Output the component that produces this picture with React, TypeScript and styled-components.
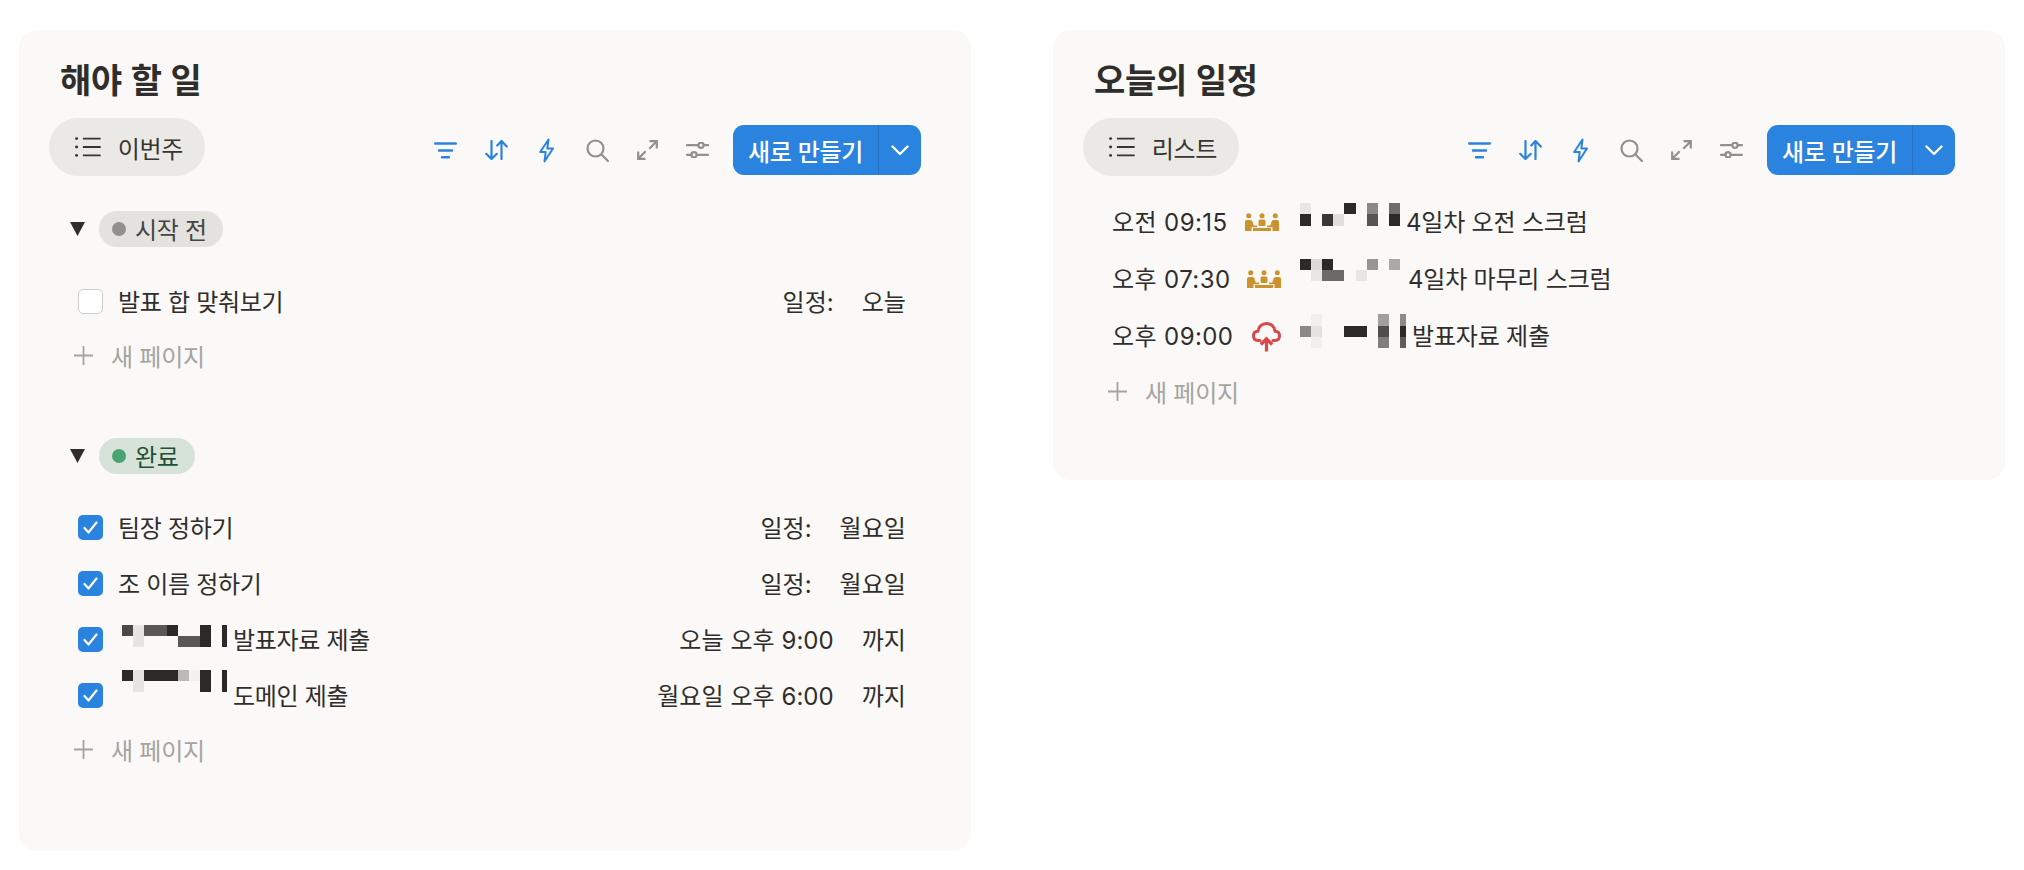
import React from "react";
import styled, { createGlobalStyle } from "styled-components";

const Global = createGlobalStyle`
  html, body { margin: 0; padding: 0; background: #fff; }
  body { font-family: Inter, "Noto Sans CJK KR", sans-serif; color: #2f2e2c; }
`;
const Page = styled.div`
  display: flex; align-items: flex-start; gap: 82px; padding: 30px 19px 0;
`;
const Panel = styled.section<{ $bottom: number }>`
  width: 952px; flex: none; box-sizing: border-box; background: #faf9f7; border-radius: 18px;
  padding: 31px 50px ${(p) => p.$bottom}px 30px;
`;
const Title = styled.h2`
  margin: 0 0 17px 11px; height: 40px; line-height: 40px; font-size: 34px; font-weight: 700; color: #2f2e2c;
  letter-spacing: -0.3px; word-spacing: 1px;
`;
const Toolbar = styled.div`
  display: flex; align-items: center; justify-content: space-between; height: 58px;
`;
const ViewPill = styled.div`
  display: flex; align-items: center; gap: 17px; height: 58px; padding: 0 22px 0 26px;
  background: #eae9e6; border-radius: 29px; font-size: 24px; color: #37352f; box-sizing: border-box;
  width: 156px; white-space: nowrap; letter-spacing: -0.3px;
`;
const Tools = styled.div`
  display: flex; align-items: center; margin-top: 6px;
`;
const ToolIcon = styled.span`
  display: flex; justify-content: center; align-items: center; width: 50.4px; height: 50px;
`;
const NewButton = styled.div`
  display: flex; height: 50px; background: #2a83de; border-radius: 11px; color: #fff; overflow: hidden; margin-left: 10px;
`;
const NewLabel = styled.span`
  display: flex; align-items: center; justify-content: center; width: 146px; box-sizing: border-box; font-size: 24px; font-weight: 500;
  letter-spacing: -0.3px; white-space: nowrap; border-right: 1px solid #2672c2;
`;
const NewCaret = styled.span`
  display: flex; align-items: center; justify-content: center; width: 42px;
`;
const GroupHead = styled.div<{ $top: number }>`
  display: flex; align-items: center; gap: 14px; margin: ${(p) => p.$top}px 0 0 21px; height: 36px;
`;
const StatusPill = styled.span<{ $bg: string; $fg: string }>`
  display: flex; align-items: center; gap: 9px; height: 36px; padding: 0 16px 0 13px; border-radius: 18px;
  background: ${(p) => p.$bg}; color: ${(p) => p.$fg}; font-size: 24px; white-space: nowrap; letter-spacing: -0.3px;
`;
const StatusText = styled.span`
  margin-bottom: 2px;
`;
const Dot = styled.i<{ $c: string }>`
  width: 14px; height: 14px; border-radius: 50%; background: ${(p) => p.$c}; flex: none;
`;
const List = styled.div<{ $top: number }>`
  margin-top: ${(p) => p.$top}px;
`;
const Row = styled.div`
  display: flex; align-items: center; height: 56px; padding: 0 15px 0 29px; font-size: 24px; letter-spacing: -0.3px; white-space: nowrap;
`;
const Check = styled.span<{ $on?: boolean }>`
  display: flex; align-items: center; justify-content: center; width: 25px; height: 25px; box-sizing: border-box; flex: none;
  margin-right: 15px; border-radius: 5px; background: ${(p) => (p.$on ? "#2a83de" : "#fff")};
  border: ${(p) => (p.$on ? "none" : "1px solid #cfcec9")};
`;
const RowName = styled.span`
  display: flex; align-items: center; flex: 1; min-width: 0; margin-bottom: 2px;
`;
const Meta = styled.span`
  display: flex; gap: 28px; margin-bottom: 2px; letter-spacing: 0.05px;
`;
const Mosaic = styled.svg<{ $lift: number; $left?: number }>`
  display: block; flex: none; margin-left: ${(p) => p.$left ?? 0}px; margin-right: 6px; margin-bottom: ${(p) => p.$lift}px;
  shape-rendering: crispEdges;
`;
const AddRow = styled.div<{ $h: number; $pad: number }>`
  display: flex; align-items: center; gap: 18px; height: ${(p) => p.$h}px; padding: 0 0 ${(p) => p.$pad}px 25px; box-sizing: border-box;
  color: #a5a49f; font-size: 24px; letter-spacing: -0.25px;
`;
const TimeRow = styled.div`
  display: flex; align-items: center; height: 57px; padding-left: 29px; font-size: 24px; white-space: nowrap; letter-spacing: -0.2px;
`;
const Time = styled.span`
  width: 133px; flex: none; letter-spacing: 0.4px; margin-bottom: 2px;
`;
const EventName = styled.span`
  margin-bottom: 2px;
`;
const EventIcon = styled.span<{ $left?: number; $down?: number }>`
  display: flex; align-items: center; justify-content: flex-end; width: 36px; flex: none;
  margin-left: ${(p) => p.$left ?? 0}px; margin-right: 19px; margin-top: ${(p) => p.$down ?? 0}px;
`;

const dark = "#2b2a28";
type Cell = [number, number, number, number, string];
const M = ({ w, h, lift, left, cells, gap }: { w: number; h: number; lift: number; left?: number; cells: Cell[]; gap?: number }) => (
  <Mosaic $lift={lift} $left={left} width={w + (gap ?? 0)} height={h} viewBox={`0 0 ${w + (gap ?? 0)} ${h}`}>
    {cells.map(([x, y, cw, ch, c], i) => <rect key={i} x={x} y={y} width={cw} height={ch} fill={c} />)}
  </Mosaic>
);

const ListIcon = () => (
  <svg width="26" height="20" viewBox="0 0 26 20" fill="#37352f" stroke="none">
    <circle cx="1.600" cy="1.500" r="1.500" /><circle cx="1.600" cy="10" r="1.500" /><circle cx="1.600" cy="18.500" r="1.500" />
    <path d="M8 1.500h18M8 10h18M8 18.500h18" stroke="#37352f" strokeWidth="1.800" />
  </svg>
);
const blue = "#2a83de";
const gray = "#91908b";
const FilterIcon = () => (
  <svg width="23" height="17" viewBox="0 0 23 17" fill="none" stroke={blue} strokeWidth="2.400" strokeLinecap="round">
    <path d="M1.200 1.500h20.600M5 8.500h13M8 15.300h7" />
  </svg>
);
const SortIcon = () => (
  <svg width="23" height="20" viewBox="0 0 23 20" fill="none" stroke={blue} strokeWidth="2.200" strokeLinecap="round" strokeLinejoin="round">
    <path d="M6.500 1v18M1.200 13.800 6.500 19l5.300-5.200" />
    <path d="M16.500 19V1M12.300 5.500 16.500 1l5.300 5.500" />
  </svg>
);
const BoltIcon = () => (
  <svg width="15" height="25" viewBox="0 0 15 25" fill="none" stroke={blue} strokeWidth="2" strokeLinejoin="round">
    <path d="M9.500 1.500 1.200 14h5.500L5.500 23.500 14 10.500H8.300L9.500 1.500Z" />
  </svg>
);
const SearchIcon = () => (
  <svg width="23" height="23" viewBox="0 0 23 23" fill="none" stroke={gray} strokeWidth="2.200" strokeLinecap="round">
    <circle cx="9.500" cy="9.500" r="8" />
    <path d="m15.500 15.500 6.500 6.500" />
  </svg>
);
const ExpandIcon = () => (
  <svg width="21" height="20" viewBox="0 0 21 20" fill="none" stroke={gray} strokeWidth="2.200">
    <path d="M12.500 1.200h7.300v7.300M19.800 1.200l-7.500 7.500M8.500 18.800H1.200v-7.300M1.200 18.800l7.500-7.500" />
  </svg>
);
const SlidersIcon = () => (
  <svg width="23" height="16" viewBox="0 0 23 16" fill="none" stroke={gray} strokeWidth="2.200" strokeLinecap="round">
    <path d="M1 3.200h11M18 3.200h4M1 12.800h4.500M11.500 12.800H22" />
    <circle cx="15" cy="3.200" r="2.600" />
    <circle cx="8" cy="12.800" r="2.600" />
  </svg>
);
const CaretIcon = () => (
  <svg width="18" height="12" viewBox="0 0 18 12" fill="none" stroke="#fff" strokeWidth="2.400" strokeLinecap="round" strokeLinejoin="round">
    <path d="M1.500 2.500 9 10l7.500-7.500" />
  </svg>
);
const Triangle = () => (
  <svg width="15" height="14" viewBox="0 0 15 14"><path d="M0 0h15L7.500 14Z" fill="#2f2e2c" /></svg>
);
const Tick = () => (
  <svg width="15" height="13" viewBox="0 0 15 13" fill="none" stroke="#fff" strokeWidth="2.200" strokeLinecap="round" strokeLinejoin="round">
    <path d="M1.500 7 5.500 11.500 13.500 1.500" />
  </svg>
);
const Plus = () => (
  <svg width="19" height="19" viewBox="0 0 19 19" fill="none" stroke="#a5a49f" strokeWidth="1.800"><path d="M9.500 0v19M0 9.500h19" /></svg>
);
const MeetingIcon = () => (
  <svg width="34" height="18" viewBox="0 0 34 18" fill="#cb922e">
    <circle cx="3.700" cy="2.700" r="2.500" /><circle cx="17" cy="2.700" r="2.500" /><circle cx="30.300" cy="2.700" r="2.500" />
    <path d="M0 18V9q0-2 2-2h3.500q1.500 0 2 1.500l1.200 4H12v1.800H6.500V18Z" />
    <path d="M34 18V9q0-2-2-2h-3.500q-1.500 0-2 1.500l-1.200 4H22v1.800h5.500V18Z" />
    <rect x="13.500" y="6.500" width="7" height="6.500" rx="1.500" />
    <rect x="8" y="15" width="18" height="3" />
  </svg>
);
const CloudIcon = () => (
  <svg width="29" height="30" viewBox="0 0 29 30" fill="none" stroke="#d9484a" strokeWidth="3" strokeLinecap="round" strokeLinejoin="round">
    <path d="M8 18.500H6C3 18.500 1.500 16.500 1.500 13.800S3 9.300 6 9.300C6.300 4.800 10 1.500 14.500 1.500S22.700 4.800 23 9.300C26 9.300 27.500 11 27.500 13.800S26 18.500 23 18.500H21" />
    <path d="M14.500 29.500V17M8.800 22.500l5.700-5.700 5.700 5.700" strokeLinecap="butt" strokeLinejoin="miter" strokeWidth="3.200" />
  </svg>
);

const Toolset = ({ label }: { label: string }) => (
  <Toolbar>
    <ViewPill><ListIcon />{label}</ViewPill>
    <Tools>
      <ToolIcon><FilterIcon /></ToolIcon>
      <ToolIcon><SortIcon /></ToolIcon>
      <ToolIcon><BoltIcon /></ToolIcon>
      <ToolIcon><SearchIcon /></ToolIcon>
      <ToolIcon><ExpandIcon /></ToolIcon>
      <ToolIcon><SlidersIcon /></ToolIcon>
      <NewButton><NewLabel>새로 만들기</NewLabel><NewCaret><CaretIcon /></NewCaret></NewButton>
    </Tools>
  </Toolbar>
);

const Add = ({ h, pad }: { h: number; pad: number }) => <AddRow $h={h} $pad={pad}><Plus />새 페이지</AddRow>;

export default function App() {
  return (
    <>
      <Global />
      <Page>
        <Panel $bottom={72}>
          <Title>해야 할 일</Title>
          <Toolset label="이번주" />
          <GroupHead $top={35}><Triangle /><StatusPill $bg="#e3e2df" $fg="#45443f"><Dot $c="#91908b" /><StatusText>시작 전</StatusText></StatusPill></GroupHead>
          <List $top={26}>
            <Row><Check /><RowName>발표 합 맞춰보기</RowName><Meta><span>일정:</span><span>오늘</span></Meta></Row>
            <Add h={56} pad={4} />
          </List>
          <GroupHead $top={53}><Triangle /><StatusPill $bg="#d7e3d9" $fg="#1e5233"><Dot $c="#4aa370" /><StatusText>완료</StatusText></StatusPill></GroupHead>
          <List $top={25}>
            <Row><Check $on><Tick /></Check><RowName>팀장 정하기</RowName><Meta><span>일정:</span><span>월요일</span></Meta></Row>
            <Row><Check $on><Tick /></Check><RowName>조 이름 정하기</RowName><Meta><span>일정:</span><span>월요일</span></Meta></Row>
            <Row><Check $on><Tick /></Check><RowName>
              <M w={105} h={22} lift={4} left={4} cells={[[0,0,11,11,"#4a4947"],[11,0,11,22,"#e6e5e3"],[22,0,23,11,"#595856"],[45,0,11,11,dark],[56,11,22,11,"#595856"],[78,0,11,22,dark],[100,0,5,22,dark]]} />
              발표자료 제출</RowName><Meta><span>오늘 오후 9:00</span><span>까지</span></Meta></Row>
            <Row><Check $on><Tick /></Check><RowName>
              <M w={105} h={22} lift={26} left={4} cells={[[0,0,11,11,dark],[11,0,11,22,"#e6e5e3"],[22,0,34,11,dark],[56,0,11,11,"#bbbab8"],[67,0,11,11,"#f2f1ef"],[78,0,11,22,dark],[100,0,5,22,dark]]} />
              도메인 제출</RowName><Meta><span>월요일 오후 6:00</span><span>까지</span></Meta></Row>
            <Add h={56} pad={4} />
          </List>
        </Panel>
        <Panel $bottom={61}>
          <Title>오늘의 일정</Title>
          <Toolset label="리스트" />
          <List $top={17}>
            <TimeRow><Time>오전 09:15</Time><EventIcon $left={-2}><MeetingIcon /></EventIcon>
              <M w={100} h={23} lift={14} left={2} cells={[[0,0,11,11,"#e8e7e5"],[0,11,11,12,dark],[22,11,11,12,"#383735"],[33,11,11,12,"#e0dfdd"],[44,0,12,11,dark],[67,0,11,11,"#8a8987"],[67,11,11,12,"#575654"],[89,0,11,11,"#6e6d6b"],[89,11,11,12,dark]]} />
              <EventName>4일차 오전 스크럼</EventName></TimeRow>
            <TimeRow><Time>오후 07:30</Time><EventIcon><MeetingIcon /></EventIcon>
              <M w={100} h={22} lift={18} gap={2} cells={[[0,0,11,11,dark],[11,0,11,11,"#dcdbd9"],[22,0,11,11,dark],[11,11,11,11,"#e8e7e5"],[22,11,22,11,"#6b6a68"],[56,11,11,11,"#e8e7e5"],[67,0,11,11,"#969593"],[89,0,11,11,"#aaa9a7"]]} />
              <EventName>4일차 마무리 스크럼</EventName></TimeRow>
            <TimeRow><Time>오후 09:00</Time><EventIcon $down={3}><CloudIcon /></EventIcon>
              <M w={106} h={34} lift={10} cells={[[11,0,11,12,"#f0efed"],[0,12,11,11,"#8a8987"],[11,12,11,11,"#e4e3e1"],[11,23,11,11,"#f0efed"],[44,12,23,11,dark],[78,0,11,12,"#a0a09e"],[78,12,11,11,"#4f4e4c"],[78,23,11,11,"#807f7d"],[100,0,6,12,"#8c8b89"],[100,12,6,11,dark],[100,23,6,11,"#5e5d5b"]]} />
              <EventName>발표자료 제출</EventName></TimeRow>
            <Add h={55} pad={0} />
          </List>
        </Panel>
      </Page>
    </>
  );
}
